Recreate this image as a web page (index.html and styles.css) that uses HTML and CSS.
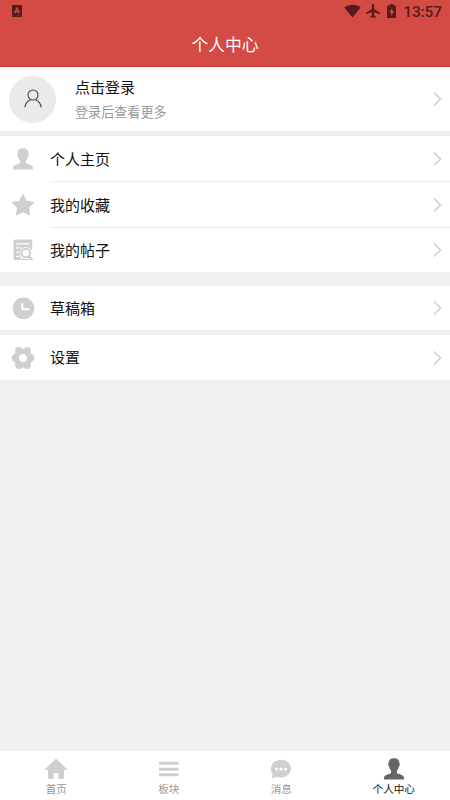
FILE: index.html
```html
<!DOCTYPE html>
<html lang="zh-CN">
<head>
<meta charset="utf-8">
<title>个人中心</title>
<link rel="stylesheet" href="styles.css">
</head>
<body>
<svg class="defs" width="0" height="0">
  <defs>
    <symbol id="chevron" viewBox="0 0 9 16"><path d="M1 1.500 7.600 8 1 14.500" fill="none" stroke="#c4c4c4" stroke-width="1.100"/></symbol>
    <symbol id="person" viewBox="0 0 24 24"><path d="M12 1.200c3.700 0 5.600 2.200 5.400 5.400.8.400.3 2.500-.5 3-.3 2-1 3.200-2 4.100v2c0 1.500 7 1.500 7.200 5.300.1 1.200-.4 1.500-1 1.500H2.900c-.6 0-1.100-.3-1-1.500C2.100 17.200 9.100 17.200 9.100 15.700v-2c-1-.9-1.700-2.100-2-4.100-.8-.5-1.300-2.600-.5-3C6.400 3.400 8.300 1.200 12 1.200Z"/></symbol>
  </defs>
</svg>
<div class="app">
  <header class="header">
    <div class="status">
      <svg class="keyboard" viewBox="0 0 10 12" width="10" height="12"><rect width="10" height="12" rx="1" fill="#551c1c"/><path d="M2.600 8.200 5 3l2.400 5.200M3.500 6.600h3" fill="none" stroke="#d44a45" stroke-width="1.200"/><path d="M5.500 10.300h3" stroke="#9a3532" stroke-width=".8"/></svg>
      <div class="status-right">
        <svg class="wifi" viewBox="0 0 17 14" width="17" height="14"><path d="M.3 3.500C5-.2 12-.2 16.700 3.500L8.500 13.500Z"/></svg>
        <svg class="plane" viewBox="0 0 14 14" width="14" height="14"><path d="M7 0c.7 0 1.100.5 1.100 1.200V5L14 8.700v1.400L8.100 8.300v3.300l1.600 1.200V14L7 13.200 4.300 14v-1.200l1.600-1.200V8.300L0 10.100V8.700L5.900 5V1.200C5.900.5 6.300 0 7 0Z"/></svg>
        <svg class="battery" viewBox="0 0 9 14" width="9" height="14"><path d="M2.700 0h3.600v1.400H8c.6 0 1 .4 1 1V13c0 .6-.4 1-1 1H1c-.6 0-1-.4-1-1V2.400c0-.6.4-1 1-1h1.700Z"/><path d="M5.300 3.800 2.200 8.400h1.900v3.500l3-5H5.300Z" fill="#d44a45"/></svg>
        <span class="clock">13:57</span>
      </div>
    </div>
    <h1 class="title">个人中心</h1>
  </header>

  <main class="content">
    <section class="profile">
      <div class="avatar"><svg viewBox="0 0 20 20" width="20" height="20"><g fill="none" stroke="#444" stroke-width="1.100"><circle cx="10" cy="6" r="5"/><path d="M1.900 18.400c.2-3.300 2.300-6.200 5.500-7.700M12.600 10.700c3.200 1.500 5.300 4.400 5.500 7.700"/></g></svg></div>
      <div class="profile-text">
        <div class="login">点击登录</div>
        <div class="hint">登录后查看更多</div>
      </div>
      <svg class="chevron"><use href="#chevron"/></svg>
    </section>

    <section class="group links">
      <div class="row">
        <svg class="icon" viewBox="0 0 24 24"><use href="#person"/></svg>
        <div class="row-body"><span>个人主页</span><svg class="chevron"><use href="#chevron"/></svg></div>
      </div>
      <div class="row">
        <svg class="icon" viewBox="0 0 24 24"><path d="m12 1.900 3.200 6.500 7.200 1-5.200 5.100 1.200 7.200L12 18.300l-6.400 3.400 1.200-7.200-5.200-5.100 7.200-1Z" stroke="#cfcfcf" stroke-width="1.400" stroke-linejoin="round"/></svg>
        <div class="row-body"><span>我的收藏</span><svg class="chevron"><use href="#chevron"/></svg></div>
      </div>
      <div class="row">
        <svg class="icon" viewBox="0 0 24 24"><path d="M4.300 1.500h15.200c1.100 0 1.800.8 1.800 1.800V12h-4L9 20l2 2H4.300c-1 0-1.800-.8-1.800-1.800V3.300c0-1 .8-1.800 1.800-1.800Z"/><path d="M9 20.600h10V22H9z"/><path d="M5 5.800h13.500M5 10h5M5 14.200h3M5 18.400h4" stroke="#fff" stroke-width="1.200" fill="none"/><circle cx="14.800" cy="15" r="6" fill="#fff"/><circle cx="14.800" cy="15" r="4.300" fill="none" stroke="#cfcfcf" stroke-width="1.900"/><path d="m18 18.200 3.600 3.800" stroke="#cfcfcf" stroke-width="2.200"/></svg>
        <div class="row-body"><span>我的帖子</span><svg class="chevron"><use href="#chevron"/></svg></div>
      </div>
    </section>

    <section class="group drafts">
      <div class="row">
        <svg class="icon" viewBox="0 0 24 24"><circle cx="12.500" cy="12.300" r="10.800"/><path d="M11.300 7.800v5.500h6" fill="none" stroke="#fff" stroke-width="2" stroke-linecap="round" stroke-linejoin="round"/></svg>
        <div class="row-body"><span>草稿箱</span><svg class="chevron"><use href="#chevron"/></svg></div>
      </div>
    </section>

    <section class="group settings">
      <div class="row">
        <svg class="icon" viewBox="0 0 24 24"><circle cx="12" cy="12" r="9.400"/><circle cx="4.300" cy="12" r="3.700"/><circle cx="19.700" cy="12" r="3.700"/><circle cx="7.800" cy="4.700" r="3.600"/><circle cx="16.200" cy="4.700" r="3.600"/><circle cx="7.800" cy="19.300" r="3.600"/><circle cx="16.200" cy="19.300" r="3.600"/><circle cx="12" cy="12" r="3.900" fill="#fff"/></svg>
        <div class="row-body"><span>设置</span><svg class="chevron"><use href="#chevron"/></svg></div>
      </div>
    </section>
  </main>

  <nav class="tabs">
    <div class="tab">
      <svg class="tab-icon" viewBox="0 0 24 24"><path d="M12 1.500 23 12c.5.600.2 1.100-.4 1.100H20v7.700c0 .7-.4 1.200-1.200 1.200h-4.500v-6H9.700v6H5.200c-.8 0-1.200-.5-1.200-1.200v-7.700H1.400C.8 13.100.5 12.600 1 12Z"/></svg>
      <span>首页</span>
    </div>
    <div class="tab">
      <svg class="tab-icon" viewBox="0 0 24 24"><path d="M2 4.800h19.500v3H2zM2 10.700h19.500v3H2zM2 16.300h19.500v3H2z"/></svg>
      <span>板块</span>
    </div>
    <div class="tab">
      <svg class="tab-icon" viewBox="0 0 24 24"><path d="M12 2.700c5.700 0 10 3.900 10 8.800s-4.300 9-10 9c-1.600 0-3-.2-4.200-.7l-4.700 1.500.6-4.200C2.500 15.700 2 13.500 2 11.500c0-4.900 4.300-8.800 10-8.800Z"/><g fill="#fff"><circle cx="7.500" cy="12" r="1.600"/><circle cx="12" cy="12" r="1.600"/><circle cx="16.500" cy="12" r="1.600"/></g></svg>
      <span>消息</span>
    </div>
    <div class="tab active">
      <svg class="tab-icon" viewBox="0 0 24 24"><use href="#person"/></svg>
      <span>个人中心</span>
    </div>
  </nav>
</div>
</body>
</html>
```
FILE: styles.css
```css
* { box-sizing: border-box; }
body {
  margin: 0;
  background: #f0f0f0;
  color: #111;
  font-family: "Noto Sans CJK SC", sans-serif;
}
svg { display: block; flex: none; }
.defs { position: absolute; }
.app { display: flex; flex-direction: column; width: 450px; height: 800px; }

.header { height: 67px; background: #d44a45; border-bottom: 1px solid #ce3a35; color: #fff; }
.status { display: flex; justify-content: space-between; height: 23px; padding: 0 8px 0 12px; }
.keyboard { margin-top: 5px; }
.status-right { display: flex; align-items: flex-start; padding-top: 4px; fill: #551c1c; color: #551c1c; }
.plane { margin-left: 5px; }
.battery { margin-left: 7px; }
.clock { margin-left: 7px; font: 500 15.500px/16px Roboto, sans-serif; letter-spacing: -.1px; }
.title { margin: 0; text-align: center; font-size: 16.800px; font-weight: 400; line-height: 43px; }

.content { flex: 1; }
.profile { display: flex; align-items: center; height: 64px; padding: 0 8px 0 9px; background: #fff; }
.avatar { display: flex; align-items: center; justify-content: center; width: 47px; height: 47px; border-radius: 50%; background: #eaeaea; }
.profile-text { flex: 1; margin-left: 19px; padding-top: 2px; }
.login { font-size: 15px; line-height: 24px; }
.hint { color: #999; font-size: 13.100px; line-height: 26px; }
.chevron { width: 9px; height: 16px; }

.group { background: #fff; }
.links { margin-top: 5px; }
.drafts { margin-top: 14px; }
.settings { margin-top: 5px; }
.row { display: flex; align-items: center; height: 46px; padding-left: 10.500px; font-size: 15px; }
.row:last-child { height: 44px; }
.row:last-child span { padding-bottom: 2px; }
.icon { width: 24px; height: 24px; fill: #cfcfcf; }
.row-body { display: flex; flex: 1; align-items: center; justify-content: space-between; height: 100%; margin-left: 15.500px; padding-right: 8px; }
.row:not(:last-child) .row-body { border-bottom: 1px solid #ececec; }
.settings .row { height: 45px; }

.tabs { display: flex; height: 49px; background: #fff; }
.tab { flex: 1; display: flex; flex-direction: column; align-items: center; padding-top: 6px; color: #999; font-size: 10.600px; line-height: 16px; }
.tab-icon { width: 24px; height: 24px; fill: #cfcfcf; }
.tab.active { color: #111; }
.tab.active .tab-icon { fill: #666; }
```
